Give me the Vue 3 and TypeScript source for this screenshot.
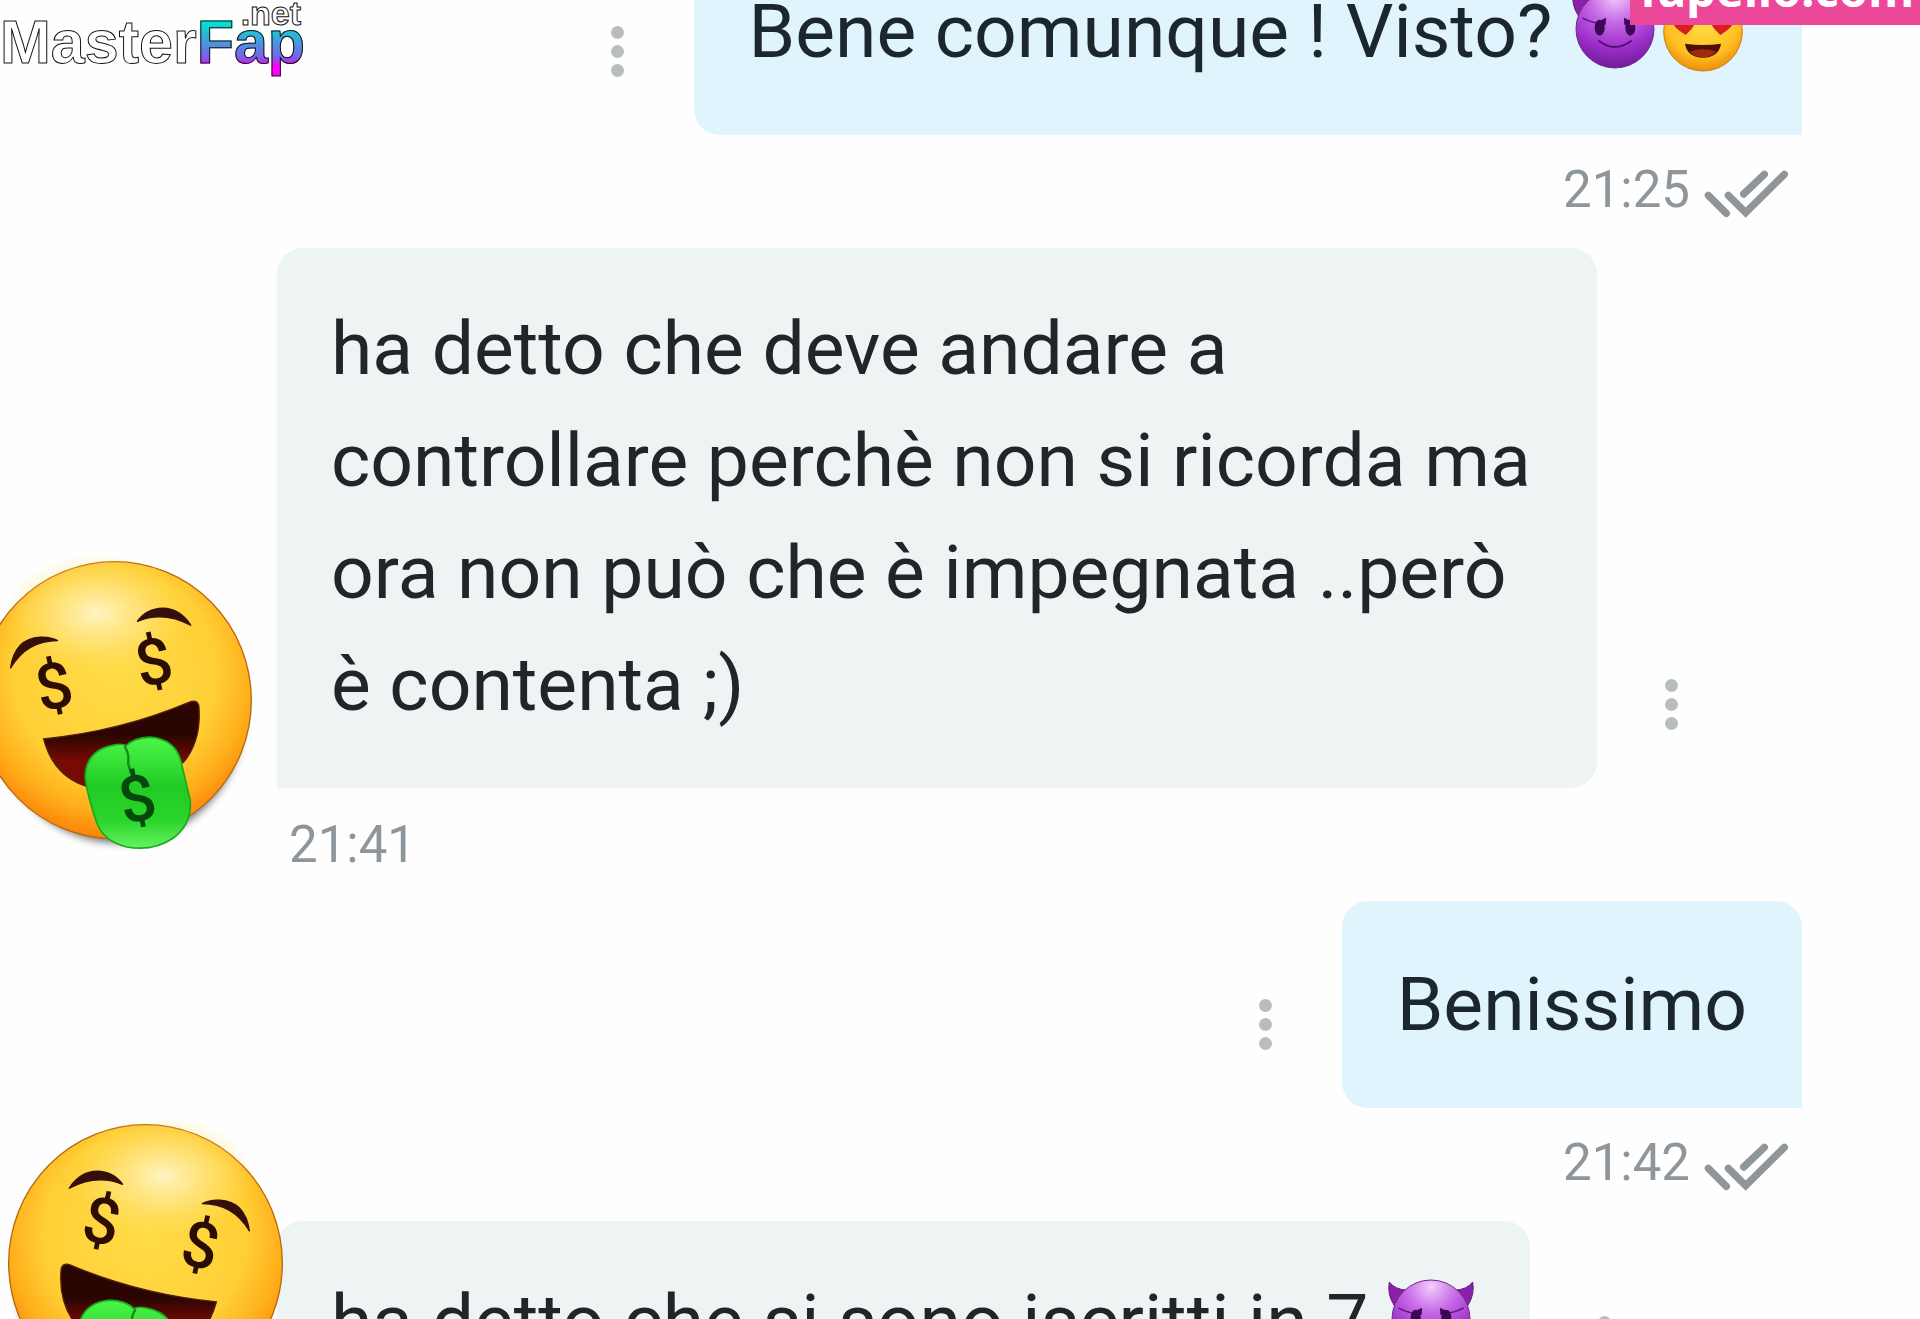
<script setup lang="ts">
type Piece = { kind: 'text' | 'devil' | 'hearts'; value?: string }
interface Message {
  id: number
  outgoing: boolean
  pieces: Piece[]
  time?: string
  sticker?: 'left' | 'right'
}

const messages: Message[] = [
  {
    id: 1,
    outgoing: true,
    pieces: [{ kind: 'text', value: 'Bene comunque ! Visto? ' }, { kind: 'devil' }, { kind: 'hearts' }],
    time: '21:25',
  },
  {
    id: 2,
    outgoing: false,
    pieces: [
      {
        kind: 'text',
        value:
          'ha detto che deve andare a controllare perchè non si ricorda ma ora non può che è impegnata ..però è contenta ;)',
      },
    ],
    time: '21:41',
    sticker: 'left',
  },
  { id: 3, outgoing: true, pieces: [{ kind: 'text', value: 'Benissimo' }], time: '21:42' },
  {
    id: 4,
    outgoing: false,
    pieces: [{ kind: 'text', value: 'ha detto che si sono iscritti in 7 ' }, { kind: 'devil' }],
    sticker: 'right',
  },
]
</script>

<template>
  <div class="page">
    <svg class="defs" width="0" height="0" aria-hidden="true">
      <defs>
        <radialGradient id="face" cx="0.5" cy="0.4" r="0.62">
          <stop offset="0" stop-color="#ffdc48" />
          <stop offset="0.6" stop-color="#ffcf35" />
          <stop offset="0.8" stop-color="#ffb01c" />
          <stop offset="1" stop-color="#fb7a04" />
        </radialGradient>
        <radialGradient id="shine" cx="0.5" cy="0.5" r="0.5">
          <stop offset="0" stop-color="#fff6cc" stop-opacity="0.95" />
          <stop offset="0.5" stop-color="#ffeb99" stop-opacity="0.55" />
          <stop offset="1" stop-color="#ffe268" stop-opacity="0" />
        </radialGradient>
        <linearGradient id="mouth" x1="0" y1="0" x2="0" y2="1">
          <stop offset="0.4" stop-color="#2b0502" />
          <stop offset="0.7" stop-color="#780a04" />
        </linearGradient>
        <linearGradient id="tongue" x1="0" y1="0" x2="0" y2="1">
          <stop offset="0" stop-color="#4cf548" />
          <stop offset="0.45" stop-color="#22cb24" />
          <stop offset="0.75" stop-color="#2bd42a" />
          <stop offset="1" stop-color="#66f25e" />
        </linearGradient>
        <radialGradient id="devil" cx="0.5" cy="0.08" r="0.95">
          <stop offset="0" stop-color="#f3ccfb" />
          <stop offset="0.35" stop-color="#c669e6" />
          <stop offset="0.7" stop-color="#9c2fc9" />
          <stop offset="1" stop-color="#6d1795" />
        </radialGradient>
        <radialGradient id="love" cx="0.5" cy="0.35" r="0.66">
          <stop offset="0" stop-color="#ffe14a" />
          <stop offset="0.7" stop-color="#ffbf22" />
          <stop offset="1" stop-color="#ec8c0c" />
        </radialGradient>
        <filter id="soft" x="-20%" y="-20%" width="140%" height="140%">
          <feGaussianBlur stdDeviation="12" />
        </filter>
      </defs>
    </svg>

    <ul class="thread">
      <li v-for="m in messages" :key="m.id" class="message" :class="m.outgoing ? 'out' : 'in'">
        <div class="row">
          <p class="bubble">
            <template v-for="(p, i) in m.pieces" :key="i">
              <template v-if="p.kind === 'text'">{{ p.value }}</template>
              <svg v-else-if="p.kind === 'devil'" class="emoji" viewBox="0 0 264 264" role="img" aria-label="devil">
                <path d="M7 21 Q22 43 62 46 L22 92 Q0 58 7 21Z M257 21 Q242 43 202 46 L242 92 Q264 58 257 21Z" fill="#8a22a8" stroke="#641685" stroke-width="3" />
                <circle cx="132" cy="132" r="117" fill="url(#devil)" stroke="#6d2a86" stroke-width="3" />
                <path d="M36 100 Q66 116 98 116 M228 100 Q198 116 166 116" fill="none" stroke="#6c168c" stroke-width="5" stroke-linecap="round" />
                <ellipse cx="86" cy="128" rx="15" ry="24" fill="#3d0756" />
                <ellipse cx="178" cy="128" rx="15" ry="24" fill="#3d0756" />
                <path d="M105 98 L104 120 L78 112Z M159 98 L160 120 L186 112Z" fill="#3d0756" />
                <path d="M84 168 Q132 204 180 168" fill="none" stroke="#561073" stroke-width="6" stroke-linecap="round" />
              </svg>
              <svg v-else class="emoji" viewBox="0 0 264 264" role="img" aria-label="heart eyes">
                <circle cx="132" cy="140" r="118" fill="url(#love)" stroke="#c97f16" stroke-width="3" />
                <path d="M80 150 Q26 118 34 82 Q48 56 78 78 Q108 62 114 90 Q112 124 80 150Z M184 150 Q238 118 230 82 Q216 56 186 78 Q156 62 150 90 Q152 124 184 150Z" fill="#d81f1f" />
                <path d="M78 176 Q132 184 186 176 Q180 216 132 218 Q84 216 78 176Z" fill="#4c1005" />
                <path d="M92 200 Q132 186 172 200 Q158 216 132 217 Q106 216 92 200Z" fill="#a2280f" />
              </svg>
            </template>
          </p>
          <button class="more" type="button" aria-label="Opzioni messaggio">
            <i></i><i></i><i></i>
          </button>
        </div>
        <div v-if="m.time" class="meta">
          <time>{{ m.time }}</time>
          <svg v-if="m.outgoing" class="ticks" viewBox="493 492 252 156" aria-hidden="true">
            <path d="M506 586 L560 640 M566 586 L618 638 L734 523 M612 582 L674 523" />
          </svg>
        </div>
        <svg v-if="m.sticker" class="sticker" :class="m.sticker" viewBox="-72 60 830 880" role="img" aria-label="money face">
          <g :transform="m.sticker === 'right' ? 'translate(686 0) scale(-1 1)' : undefined">
            <ellipse cx="356" cy="530" rx="372" ry="378" fill="#000" opacity="0.6" filter="url(#soft)" />
            <ellipse cx="343" cy="481" rx="411" ry="416" fill="url(#face)" stroke="#b8690c" stroke-width="4" />
            <ellipse cx="290" cy="220" rx="280" ry="180" fill="url(#shine)" />
            <path d="M31 384 Q44 296 120 292 Q150 290 172 302 Q80 302 31 384Z M412 244 Q440 206 488 205 Q540 206 572 256 Q490 212 412 244Z" fill="#35100a" stroke="#35100a" stroke-width="4" stroke-linejoin="round" />
            <path d="M130 597 Q360 575 570 486 Q590 480 596 496 Q606 600 550 668 L260 740 Q160 710 130 597Z" fill="url(#mouth)" stroke="#51200a" stroke-width="4" />
            <path d="M255 715 Q255 632 340 616 Q366 610 378 618 Q400 594 450 592 Q524 598 542 662 L570 780 Q578 850 520 895 Q460 936 380 922 Q310 905 290 850 Q262 770 255 715Z" fill="url(#tongue)" stroke="#17ab1c" stroke-width="5" />
            <path d="M373 620 Q388 642 384 670 L392 700" fill="none" stroke="#128a18" stroke-width="7" />
          </g>
          <g class="money" text-anchor="middle">
            <template v-if="m.sticker === 'left'">
              <text transform="translate(161 440) rotate(-12)" y="66">$</text>
              <text transform="translate(461 367) rotate(-12)" y="66">$</text>
              <text transform="translate(411 778) rotate(-12)" y="66" class="dark">$</text>
            </template>
            <template v-else>
              <text transform="translate(508 428) rotate(12)" y="66">$</text>
              <text transform="translate(211 355) rotate(12)" y="66">$</text>
              <text transform="translate(275 778) rotate(12)" y="66" class="dark">$</text>
            </template>
          </g>
        </svg>
      </li>
    </ul>

    <div class="logo"><span>Master</span><span class="fap">Fap</span><span class="net">.net</span></div>
    <a class="banner" href="#"><span>fapello.com</span></a>
  </div>
</template>

<style>
body {
  margin: 0;
  background: #fefefe;
}
</style>

<style scoped>
.page {
  position: relative;
  height: 100vh;
  overflow: hidden;
  background: #fefefe;
  font-family: Roboto, 'Liberation Sans', sans-serif;
}
.defs {
  position: absolute;
}
.thread {
  list-style: none;
  margin: -72px 0 0;
  padding: 0 118px 0 277px;
}
.message {
  position: relative;
}
.row {
  display: flex;
  align-items: flex-end;
  gap: 58px;
}
.out .row {
  flex-direction: row-reverse;
  gap: 60px;
}
.bubble {
  margin: 0;
  max-width: 1320px;
  box-sizing: border-box;
  padding: 44px 55px 48px 54px;
  border-radius: 26px 26px 26px 0;
  background: #eef3f4;
  color: #202628;
  font-size: 75px;
  line-height: 112px;
}
.out .bubble {
  padding: 47px 55px 48px;
  border-radius: 26px 26px 0 26px;
  background: #dff4fd;
  color: #1b272d;
}
.emoji {
  width: 88px;
  height: 88px;
  vertical-align: -16px;
}
.more {
  display: flex;
  flex-direction: column;
  align-items: center;
  gap: 6px;
  flex: none;
  width: 32px;
  margin: 0 0 58px;
  padding: 0;
  border: 0;
  background: none;
}
.more i {
  width: 13px;
  height: 13px;
  border-radius: 50%;
  background: #b8bebf;
}
.meta {
  display: flex;
  gap: 14px;
  box-sizing: border-box;
  height: 113px;
  padding: 31px 14px 0 12px;
  color: #8e969b;
  font-size: 51px;
  line-height: 52px;
}
.out .meta {
  justify-content: flex-end;
  padding-top: 29px;
}
.ticks {
  width: 84px;
  height: 52px;
  overflow: visible;
  fill: none;
  stroke: #8e969c;
  stroke-width: 22px;
  stroke-linecap: round;
}
.sticker {
  position: absolute;
  width: 277px;
  height: 293px;
  overflow: visible;
}
.sticker.left {
  left: -301px;
  top: 312px;
}
.sticker.right {
  left: -270px;
  top: -98px;
}
.money {
  font-size: 192px;
  font-weight: 500;
  fill: #2c0d04;
}
.money .dark {
  fill: #06470b;
}
.logo {
  position: absolute;
  top: 0;
  left: 0;
  font-family: 'Liberation Sans', Arial, sans-serif;
  font-weight: 700;
  font-size: 61px;
  line-height: 84px;
  color: #fff;
  -webkit-text-stroke: 1px #111;
  white-space: nowrap;
}
.fap {
  background: linear-gradient(#00e6d0 20%, #7a62e8 72%, #ff00ff 86%);
  background-clip: text;
  -webkit-background-clip: text;
  color: transparent;
}
.net {
  position: absolute;
  top: 0;
  right: 4px;
  font-size: 34px;
  line-height: 26px;
}
.banner {
  position: absolute;
  top: 0;
  right: 0;
  height: 25px;
  padding: 0 6px 0 10px;
  background: #ec4899;
  color: #fff;
  font-family: 'Noto Sans', 'Open Sans', sans-serif;
  font-weight: 700;
  font-size: 47px;
  line-height: 0;
  text-decoration: none;
}
.banner span {
  display: block;
  margin-top: -11px;
}
</style>
